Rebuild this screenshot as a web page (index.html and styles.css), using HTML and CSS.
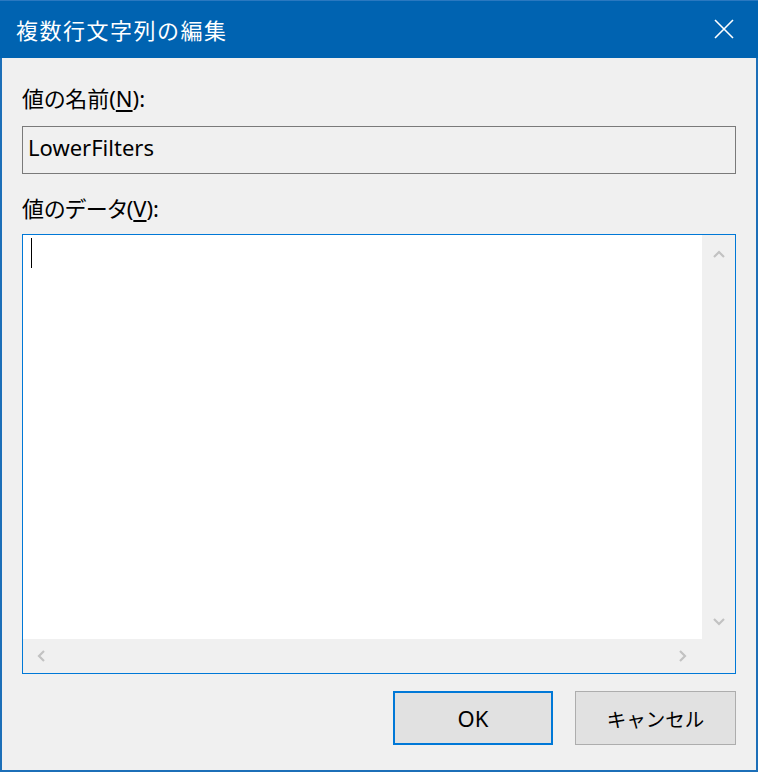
FILE: index.html
```html
<!DOCTYPE html>
<html lang="ja">
<head>
<meta charset="utf-8">
<title>複数行文字列の編集</title>
<link rel="stylesheet" href="styles.css">
</head>
<body>
<div class="window">
  <div class="titlebar">
    <span class="title">複数行文字列の編集</span>
    <span class="close">
      <svg width="20" height="20" viewBox="0 0 20 20"><path d="M1 1 L19 19 M19 1 L1 19" stroke="#fff" stroke-width="1.6" fill="none"/></svg>
    </span>
  </div>
  <div class="content">
    <div class="label">値の名前(<u>N</u>):</div>
    <div class="namebox">LowerFilters</div>
    <div class="label label2">値のデータ(<u>V</u>):</div>
    <div class="textarea">
      <div class="editarea"><span class="caret"></span></div>
      <div class="vscroll">
        <svg width="12" height="8" viewBox="0 0 12 8"><path d="M1 7 L6 2 L11 7" stroke="#c2c2c2" stroke-width="2.2" fill="none"/></svg>
        <svg width="12" height="8" viewBox="0 0 12 8"><path d="M1 1 L6 6 L11 1" stroke="#c2c2c2" stroke-width="2.2" fill="none"/></svg>
      </div>
      <div class="hscroll">
        <svg width="8" height="12" viewBox="0 0 8 12"><path d="M7 1 L2 6 L7 11" stroke="#c2c2c2" stroke-width="2.2" fill="none"/></svg>
        <svg width="8" height="12" viewBox="0 0 8 12"><path d="M1 1 L6 6 L1 11" stroke="#c2c2c2" stroke-width="2.2" fill="none"/></svg>
      </div>
      <div class="corner"></div>
    </div>
    <div class="buttons">
      <div class="btn btn-default"><span class="ok">OK</span></div>
      <div class="btn">キャンセル</div>
    </div>
  </div>
</div>
</body>
</html>
```
FILE: styles.css
```css
html, body {
  margin: 0;
  padding: 0;
  background: #f0f0f0;
}
body {
  font-family: "Noto Sans", "Noto Sans CJK JP", sans-serif;
  color: #000;
}
.window {
  width: 758px;
  height: 772px;
  box-sizing: border-box;
  border: 2px solid #1c6fb8;
  border-top: 0;
  background: #f0f0f0;
  display: flex;
  flex-direction: column;
}
.window > * {
  flex-shrink: 0;
}
.titlebar {
  height: 58px;
  margin: 0 -2px;
  background: #0063b1;
  border-top: 1px solid #2a78c0;
  box-sizing: border-box;
  display: flex;
  align-items: center;
  justify-content: space-between;
  padding: 0 24px 0 16px;
}
.title {
  color: #fff;
  font-family: "Noto Sans CJK JP", sans-serif;
  font-size: 22px;
  letter-spacing: 1.5px;
  margin-top: -1px;
}
.close {
  display: flex;
  margin-top: -1px;
}
.content {
  padding: 0 20px;
  display: flex;
  flex-direction: column;
}
.content > * {
  flex-shrink: 0;
}
.label {
  font-family: "Noto Sans", "Noto Sans CJK JP", sans-serif;
  font-size: 22px;
  font-feature-settings: "palt";
  height: 28px;
  line-height: 28px;
  margin-top: 26px;
}
.label u {
  text-underline-offset: 3px;
}
.label2 {
  margin-top: 20px;
}
.namebox {
  margin-top: 14px;
  height: 48px;
  box-sizing: border-box;
  border: 1px solid #7a7a7a;
  background: #f0f0f0;
  font-size: 22px;
  line-height: 40px;
  padding-left: 5px;
}
.textarea {
  margin-top: 12px;
  height: 440px;
  box-sizing: border-box;
  border: 1px solid #0078d7;
  display: grid;
  grid-template-columns: 1fr 33px;
  grid-template-rows: 1fr 34px;
}
.editarea {
  background: #fff;
  padding: 3px 0 0 8px;
}
.caret {
  display: block;
  width: 1px;
  height: 30px;
  background: #000;
}
.vscroll {
  background: #f0f0f0;
  display: flex;
  flex-direction: column;
  justify-content: space-between;
  align-items: center;
  padding: 15px 0 13px;
}
.hscroll {
  background: #f0f0f0;
  display: flex;
  justify-content: space-between;
  align-items: center;
  padding: 0 15px 0 14px;
}
.corner {
  background: #f0f0f0;
}
.buttons {
  margin-top: 17px;
  display: flex;
  justify-content: flex-end;
  gap: 22px;
}
.btn {
  width: 161px;
  height: 54px;
  box-sizing: border-box;
  border: 1px solid #adadad;
  background: #e1e1e1;
  display: flex;
  align-items: center;
  justify-content: center;
  font-size: 19.5px;
  font-family: "Noto Sans", "Noto Sans CJK JP", sans-serif;
}
.btn-default {
  width: 160px;
  border: 2px solid #0078d7;
}
.ok {
  font-size: 22px;
}
```
